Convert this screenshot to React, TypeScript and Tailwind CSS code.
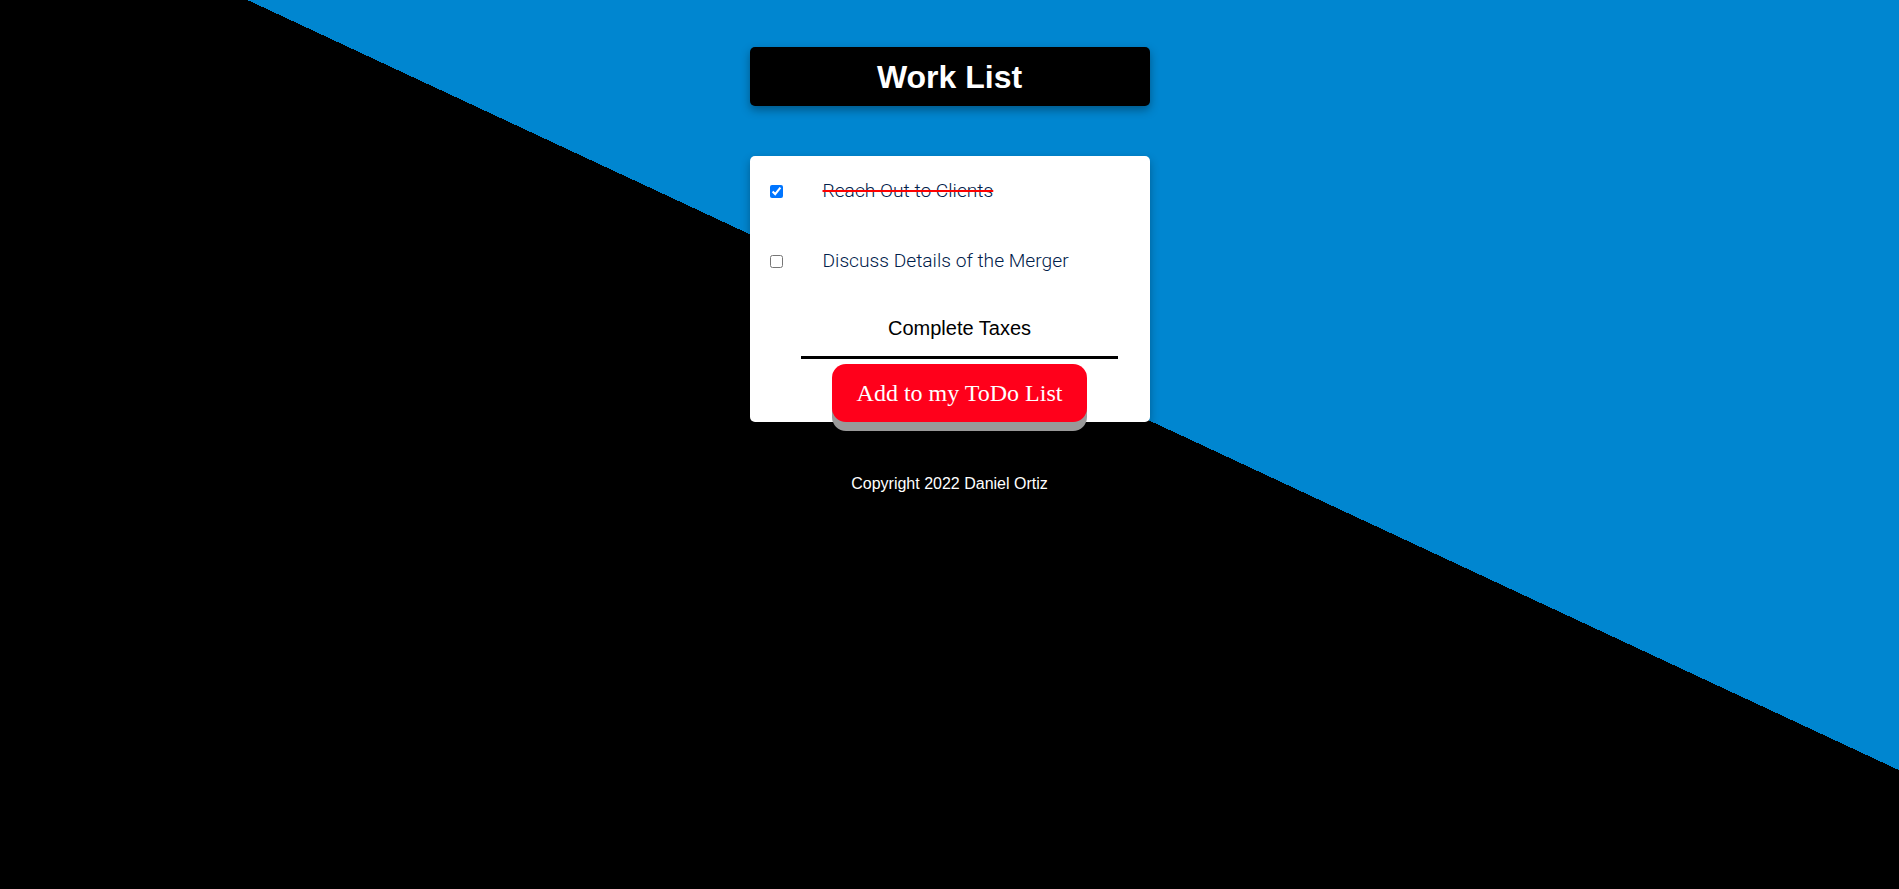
import React, { useState } from "react";

export default function App() {
  const [items, setItems] = useState([
    { text: "Reach Out to Clients", done: true },
    { text: "Discuss Details of the Merger", done: false },
  ]);
  const [value, setValue] = useState("Complete Taxes");

  return (
    <div className="min-h-screen w-full bg-[linear-gradient(25deg,#000_56.6%,#0086d0_56.6%)] font-['Liberation_Sans',Arial,sans-serif]">
      <div className="flex flex-col items-center pt-[47px]">
        <div className="flex h-[59px] w-[400px] items-center justify-center rounded-[5px] bg-black shadow-[0_4px_10px_rgba(0,0,0,0.35)]">
          <h1 className="text-[32px] font-bold text-white">Work List</h1>
        </div>

        <div className="mt-[50px] w-[400px] rounded-[5px] bg-white shadow-[0_4px_10px_rgba(0,0,0,0.3)]">
          {items.map((item, i) => (
            <div key={i} className="flex h-[70px] items-center">
              <input
                type="checkbox"
                checked={item.done}
                onChange={() =>
                  setItems(items.map((it, j) => (j === i ? { ...it, done: !it.done } : it)))
                }
                className="m-0 ml-[20px] mr-[20px] h-[13px] w-[13px] shrink-0"
              />
              <p
                className={
                  "pl-[20px] font-['Roboto',sans-serif] text-[19.2px] font-light text-[#00204a] " +
                  (item.done ? "line-through decoration-[#ff0000] decoration-2" : "")
                }
              >
                {item.text}
              </p>
            </div>
          ))}
          <div className="ml-[20px] flex flex-col items-center">
            <input
              value={value}
              onChange={(e) => setValue(e.target.value)}
              className="h-[63px] w-[317px] border-b-[3px] border-black bg-transparent pt-[5px] text-center text-[20px] text-black outline-none"
            />
            <button className="mt-[5px] h-[58px] w-[255px] rounded-[14px] bg-[#ff001b] font-['Liberation_Serif',serif] text-[24px] text-white shadow-[0_9px_0_#999]">
              Add to my ToDo List
            </button>
          </div>
        </div>

        <p className="mt-[50px] text-[16px] text-white">Copyright 2022 Daniel Ortiz</p>
      </div>
    </div>
  );
}
